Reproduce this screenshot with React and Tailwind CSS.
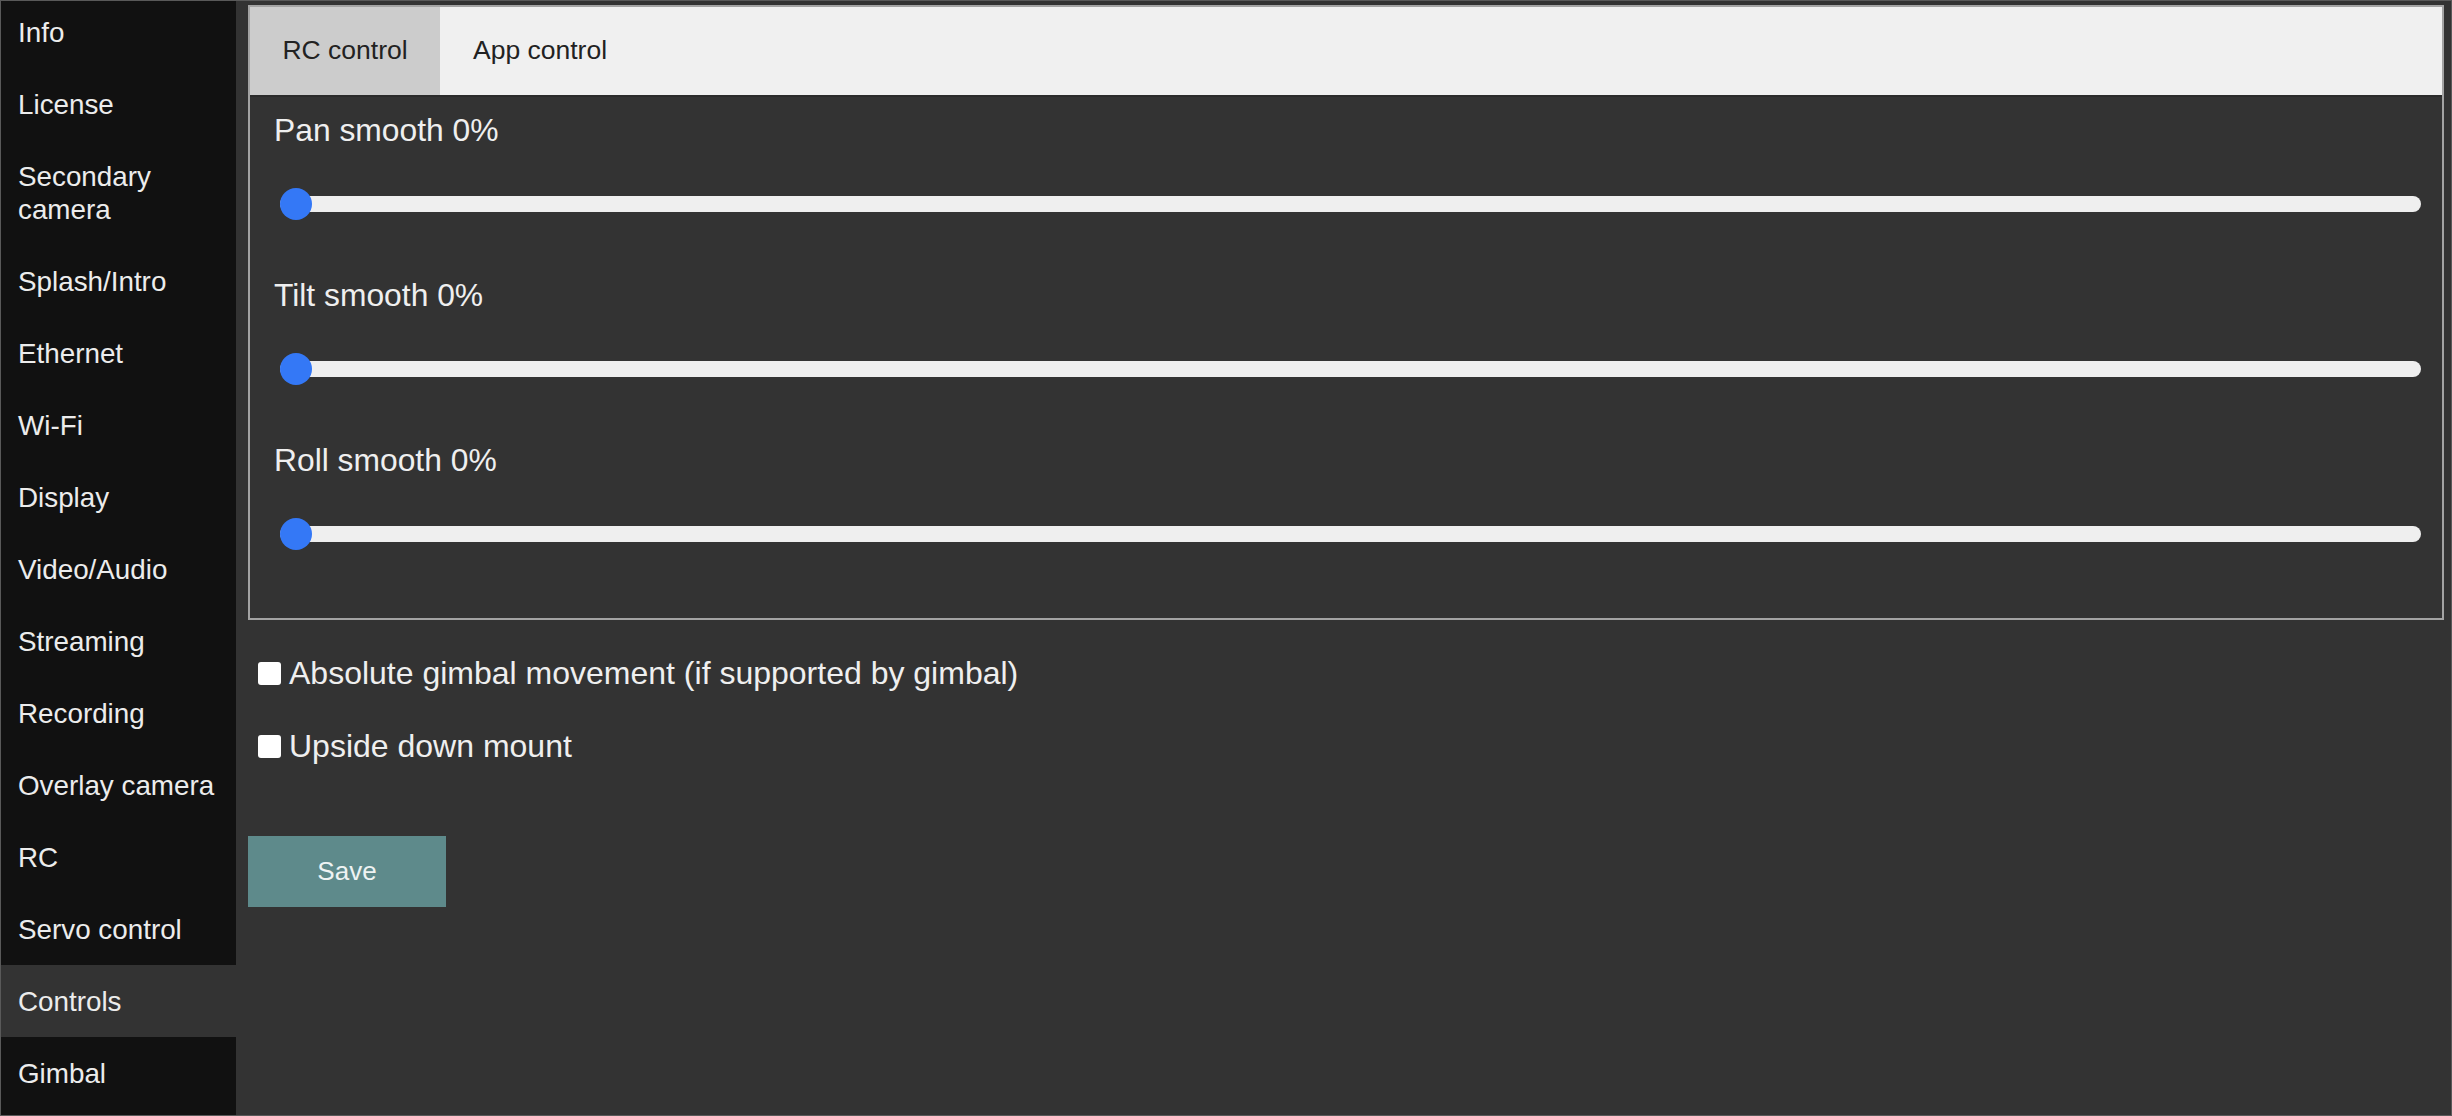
import { useState } from 'react';

const menu = [
  'Info',
  'License',
  'Secondary camera',
  'Splash/Intro',
  'Ethernet',
  'Wi-Fi',
  'Display',
  'Video/Audio',
  'Streaming',
  'Recording',
  'Overlay camera',
  'RC',
  'Servo control',
  'Controls',
  'Gimbal',
];

const sliders = ['Pan smooth', 'Tilt smooth', 'Roll smooth'];

function Slider({ value }) {
  return (
    <div className="relative ml-[6px] h-[32px] flex items-center">
      <div className="h-[16px] w-full rounded-full bg-[#efefef]" />
      <div
        className="absolute top-0 h-[32px] w-[32px] rounded-full bg-[#3478f6]"
        style={{ left: `${value}%` }}
      />
    </div>
  );
}

export default function App() {
  const [active, setActive] = useState('Controls');
  const [tab, setTab] = useState('rc');
  const [values] = useState([0, 0, 0]);

  return (
    <div
      className="flex h-[1116px] w-[2452px] overflow-hidden border border-[#595959] bg-[#333333]"
      style={{ fontFamily: '"Liberation Sans", Arial, sans-serif' }}
    >
      {/* Sidebar */}
      <div className="w-[235px] shrink-0 overflow-hidden bg-[#111111]">
        <div className="-mt-[5px]">
          {menu.map((item) => (
            <div
              key={item}
              onClick={() => setActive(item)}
              className={`cursor-pointer py-[19.5px] pl-[17px] pr-[8px] text-[27.8px] leading-[33px] text-[#ececec] ${
                active === item ? 'bg-[#333333]' : ''
              }`}
            >
              {item}
            </div>
          ))}
        </div>
      </div>

      {/* Main */}
      <div className="flex-1 pl-[12px] pr-[7px] pt-[4px]">
        <div className="border-2 border-[#a3a3a3]">
          <div className="flex h-[88px] bg-[#f0f0f0] text-[26.5px] text-[#222]">
            <div
              onClick={() => setTab('rc')}
              className={`flex w-[190px] cursor-pointer items-center justify-center ${tab === 'rc' ? 'bg-[#cccccc]' : ''}`}
            >
              RC control
            </div>
            <div
              onClick={() => setTab('app')}
              className={`flex cursor-pointer items-center px-[33px] ${tab === 'app' ? 'bg-[#cccccc]' : ''}`}
            >
              App control
            </div>
          </div>
          <div className="border-t-2 border-[#2b2b2b] pb-[12px] pl-[24px] pr-[21px] pt-[15px]">
            {sliders.map((label, i) => (
              <div key={label} className="mb-[57px] last:mb-[56px]">
                <div className="text-[31.8px] leading-[36px] text-[#efefef]">
                  {label} {values[i]}%
                </div>
                <div className="mt-[40px]">
                  <Slider value={values[i]} />
                </div>
              </div>
            ))}
          </div>
        </div>

        {/* Options */}
        <div className="mt-[35px] flex flex-col gap-[37px] pl-[10px]">
          <label className="flex items-center gap-[8px] text-[32px] leading-[36px] text-[#efefef]">
            <span className="h-[23px] w-[23px] rounded-[3px] bg-white" />
            Absolute gimbal movement (if supported by gimbal)
          </label>
          <label className="flex items-center gap-[8px] text-[32px] leading-[36px] text-[#efefef]">
            <span className="h-[23px] w-[23px] rounded-[3px] bg-white" />
            Upside down mount
          </label>
        </div>

        <button className="mt-[72px] flex h-[71px] w-[198px] items-center justify-center bg-[#5e8a8b] text-[26px] text-[#eef3f3]">
          Save
        </button>
      </div>
    </div>
  );
}
